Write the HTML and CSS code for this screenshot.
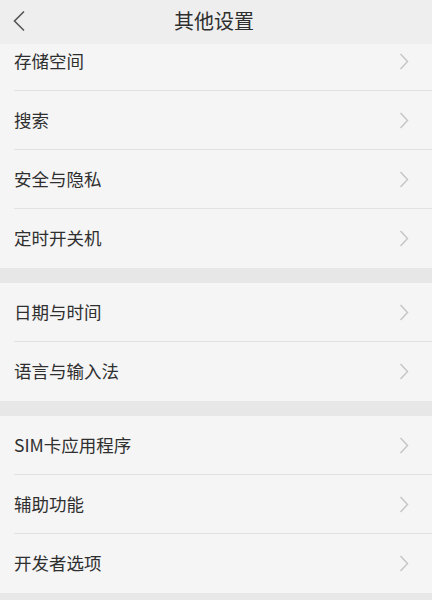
FILE: index.html
```html
<!DOCTYPE html>
<html>
<head>
	<meta charset="utf-8">
	<title>其他设置</title>
	<link rel="stylesheet" href="styles.css">
</head>
<body>

<div class="screen">

<header class="topbar">
	<svg class="back" width="14" height="22" viewBox="0 0 14 22">
		<path d="M12 1.5 L2.5 11 L12 20.5" fill="none" stroke="#555" stroke-width="1.6"/>
	</svg>
	<h1>其他设置</h1>
</header>

<div class="content">
<div class="list">

	<section class="group">
		<div class="row"><span>存储空间</span><svg class="chev" viewBox="0 0 10 17"><path d="M1.5 1 L8.5 8.5 L1.5 16"/></svg></div>
		<div class="row"><span>搜索</span><svg class="chev" viewBox="0 0 10 17"><path d="M1.5 1 L8.5 8.5 L1.5 16"/></svg></div>
		<div class="row"><span>安全与隐私</span><svg class="chev" viewBox="0 0 10 17"><path d="M1.5 1 L8.5 8.5 L1.5 16"/></svg></div>
		<div class="row"><span>定时开关机</span><svg class="chev" viewBox="0 0 10 17"><path d="M1.5 1 L8.5 8.5 L1.5 16"/></svg></div>
	</section>

	<section class="group">
		<div class="row"><span>日期与时间</span><svg class="chev" viewBox="0 0 10 17"><path d="M1.5 1 L8.5 8.5 L1.5 16"/></svg></div>
		<div class="row"><span>语言与输入法</span><svg class="chev" viewBox="0 0 10 17"><path d="M1.5 1 L8.5 8.5 L1.5 16"/></svg></div>
	</section>

	<section class="group">
		<div class="row"><span>SIM卡应用程序</span><svg class="chev" viewBox="0 0 10 17"><path d="M1.5 1 L8.5 8.5 L1.5 16"/></svg></div>
		<div class="row"><span>辅助功能</span><svg class="chev" viewBox="0 0 10 17"><path d="M1.5 1 L8.5 8.5 L1.5 16"/></svg></div>
		<div class="row"><span>开发者选项</span><svg class="chev" viewBox="0 0 10 17"><path d="M1.5 1 L8.5 8.5 L1.5 16"/></svg></div>
	</section>

</div>
</div>

</div>

</body>
</html>
```

FILE: styles.css
```css
body {
	margin: 0;
	background-color: #e7e7e7;
	font-family: "Noto Sans CJK SC", "Liberation Sans", sans-serif;
	color: #333;
}

.screen {
	width: 432px;
	height: 600px;
	overflow: hidden;
	display: flex;
	flex-direction: column;
}

.topbar {
	height: 44px;
	flex: none;
	background-color: #eeeeee;
	display: flex;
	align-items: center;
	justify-content: center;
	position: relative;
}

.topbar h1 {
	margin: 0;
	font-size: 20px;
	font-weight: normal;
	color: #2e2e2e;
	line-height: 1;
	margin-left: -4px;
	margin-top: -2px;
}

.back {
	position: absolute;
	left: 12px;
	top: 10px;
}

.content {
	flex: 1;
	overflow: hidden;
}

.list {
	margin-top: -12px;
}

.group {
	background-color: #f5f5f5;
	margin-bottom: 15px;
}

.row {
	height: 59px;
	margin-left: 14px;
	padding-right: 23px;
	display: flex;
	align-items: center;
	justify-content: space-between;
	border-bottom: 1px solid #e2e2e2;
	box-sizing: border-box;
}

.row:last-child {
	border-bottom: none;
}

.row span {
	font-size: 17.5px;
	line-height: 1;
	margin-top: -1px;
	color: #2f2f2f;
}

.chev {
	width: 10px;
	height: 17px;
	fill: none;
	stroke: #c6c6c6;
	stroke-width: 1.5;
}
```
